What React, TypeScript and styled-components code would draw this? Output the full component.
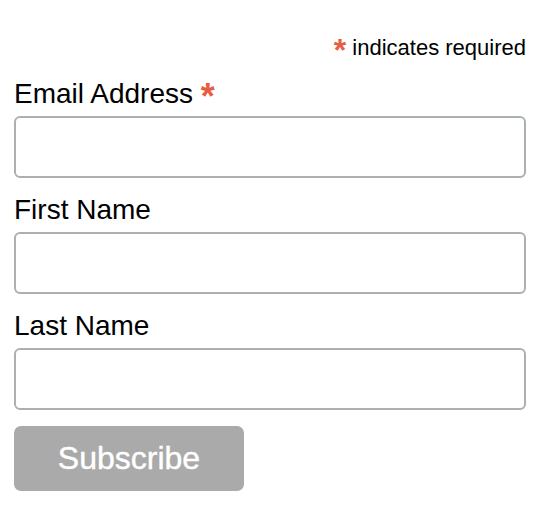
import React from 'react';
import styled, { createGlobalStyle } from 'styled-components';

const GlobalStyle = createGlobalStyle`
  html, body {
    margin: 0;
    padding: 0;
    background: #ffffff;
  }
  body {
    font-family: 'Liberation Sans', Arial, Helvetica, sans-serif;
    color: #000000;
  }
`;

const StyledForm = styled.form`
  display: flex;
  flex-direction: column;
  padding: 35px 20px 0 14px;
`;

const StyledRequired = styled.div`
  text-align: right;
  font-size: 22px;
  margin-bottom: 17px;
`;

const StyledAsterisk = styled.span<{ $size: number }>`
  color: #e85c41;
  font-size: ${(p) => p.$size}px;
  font-weight: bold;
  line-height: 0;
  position: relative;
  top: 6px;
`;

const StyledFieldGroup = styled.div`
  display: flex;
  flex-direction: column;
  margin-bottom: 16px;
`;

const StyledLabel = styled.label`
  font-size: 28px;
  margin-bottom: 6px;
`;

const StyledInput = styled.input`
  box-sizing: border-box;
  width: 100%;
  height: 62px;
  border: 2px solid #abb0b2;
  border-radius: 6px;
  background: #ffffff;
  font-family: inherit;
  font-size: 28px;
  padding: 0 10px;
  outline: none;
`;

const StyledButton = styled.button`
  align-self: flex-start;
  width: 230px;
  height: 65px;
  padding: 0;
  border: none;
  border-radius: 7px;
  background-color: #aaaaaa;
  color: #ffffff;
  font-family: inherit;
  font-size: 32px;
  -webkit-text-stroke: 0.4px #ffffff;
  cursor: pointer;
`;

const fields = [
  { id: 'mce-EMAIL', label: 'Email Address', required: true },
  { id: 'mce-FNAME', label: 'First Name', required: false },
  { id: 'mce-LNAME', label: 'Last Name', required: false },
];

export default function App() {
  return (
    <>
      <GlobalStyle />
      <StyledForm onSubmit={(e) => e.preventDefault()}>
        <StyledRequired>
          <StyledAsterisk $size={32}>*</StyledAsterisk> indicates required
        </StyledRequired>
        {fields.map((field) => (
          <StyledFieldGroup key={field.id}>
            <StyledLabel htmlFor={field.id}>
              {field.label}
              {field.required && (
                <>
                  {' '}
                  <StyledAsterisk $size={36}>*</StyledAsterisk>
                </>
              )}
            </StyledLabel>
            <StyledInput id={field.id} type={field.required ? 'email' : 'text'} />
          </StyledFieldGroup>
        ))}
        <StyledButton type="submit">Subscribe</StyledButton>
      </StyledForm>
    </>
  );
}
